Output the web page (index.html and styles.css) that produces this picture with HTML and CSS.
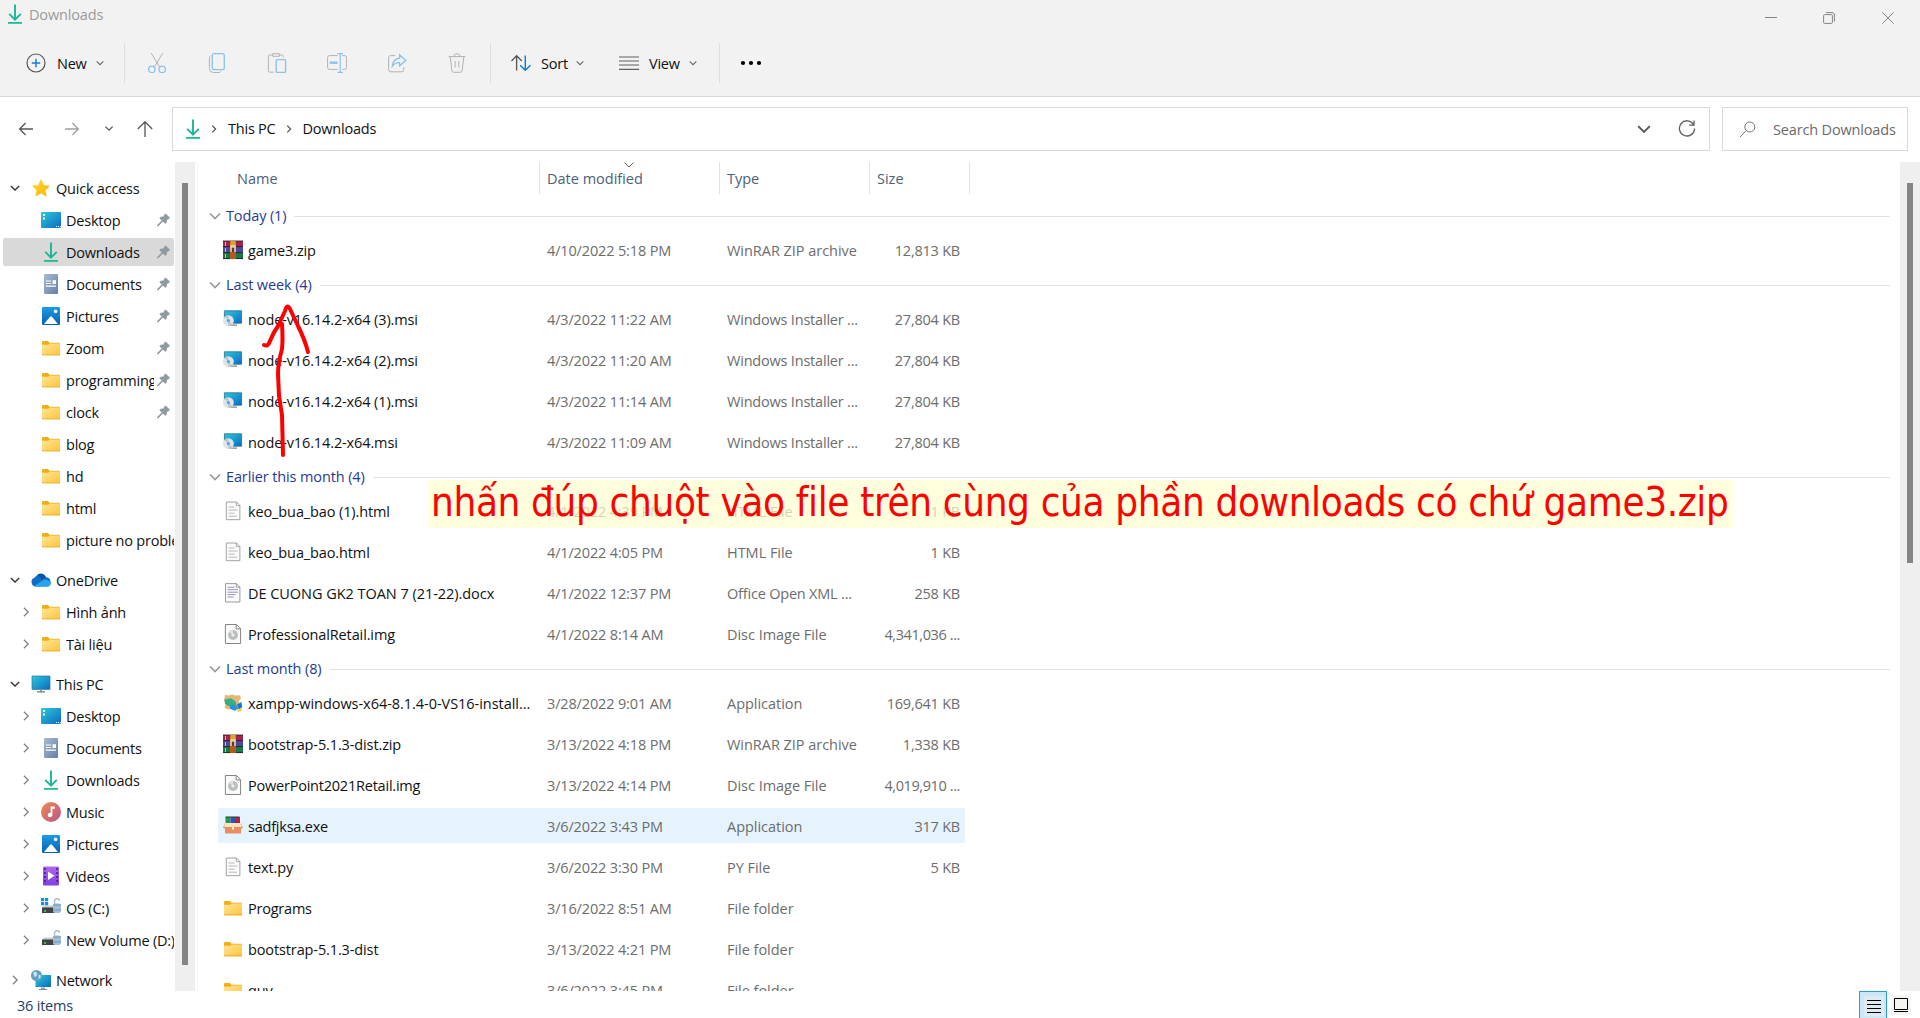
FILE: index.html
```html
<!DOCTYPE html>
<html lang="en">
<head>
<meta charset="utf-8">
<title>Downloads</title>
<link rel="stylesheet" href="styles.css">
</head>
<body>
<svg class="defs" width="0" height="0" aria-hidden="true">
  <defs>
    <linearGradient id="gFolder" x1="0" y1="0" x2="1" y2="1"><stop offset="0" stop-color="#ffe59a"/><stop offset="1" stop-color="#fdc53a"/></linearGradient>
    <linearGradient id="gBlue" x1="0" y1="0" x2="1" y2="1"><stop offset="0" stop-color="#2cc9dc"/><stop offset="1" stop-color="#0c6ac0"/></linearGradient>
    <linearGradient id="gPic" x1="0" y1="0" x2="0" y2="1"><stop offset="0" stop-color="#1e9be4"/><stop offset="1" stop-color="#0a5fb8"/></linearGradient>
    <linearGradient id="gDoc" x1="0" y1="0" x2="1" y2="1"><stop offset="0" stop-color="#a9bcd3"/><stop offset="1" stop-color="#647fa5"/></linearGradient>
    <linearGradient id="gMusic" x1="0" y1="0" x2="1" y2="1"><stop offset="0" stop-color="#ee8a4e"/><stop offset="1" stop-color="#b7568f"/></linearGradient>
    <linearGradient id="gVideo" x1="0" y1="0" x2="0" y2="1"><stop offset="0" stop-color="#b069ea"/><stop offset="1" stop-color="#7f3fe0"/></linearGradient>
    <linearGradient id="gStar" x1="0" y1="0" x2="1" y2="1"><stop offset="0" stop-color="#ffd73a"/><stop offset="1" stop-color="#fdb400"/></linearGradient>
  </defs>
  <symbol id="download" viewBox="0 0 20 20"><path d="M10 .6v14.6M4.2 9.8l5.8 5.8 5.8-5.8" fill="none" stroke="#1db598" stroke-width="1.9"/><path d="M3 18h14v1.8H3z" fill="#20bb93"/></symbol>
  <symbol id="folder" viewBox="0 0 20 20"><path d="M1 4.2Q1 3 2.2 3H7l1.6 1.8H18q1 0 1 1V9H1z" fill="#f3ae14"/><path d="M1 6.8h6.4l1.3-1.3H19v11.7H1z" fill="url(#gFolder)"/><path d="M1 16.4h18v.9H1z" fill="#eaa621"/></symbol>
  <symbol id="desktop" viewBox="0 0 20 20"><rect y="2" width="20" height="16" rx="1" fill="url(#gBlue)"/><path d="M2 4h2v2H2zM2 7.5h2v2H2z" fill="#fff"/><path d="M15 16.6h1.2M17 16.6h1.2M19 16.6h.8" stroke="#fff"/></symbol>
  <symbol id="document" viewBox="0 0 20 20"><rect x="3" width="14" height="20" rx="1" fill="url(#gDoc)"/><path d="M5 7h5M5 9.5h5M5 12.2h10" stroke="#fff" stroke-width="1.2"/><path d="M11.5 6.3h3.5v3.6h-3.5z" fill="#fff"/></symbol>
  <symbol id="picture" viewBox="0 0 20 20"><rect x="1" y="1" width="18" height="18" rx="1.2" fill="url(#gPic)"/><path d="M3 18l5.8-7q1.2-1.3 2.4 0L17 18z" fill="#fff"/><circle cx="14.6" cy="5.4" r="1.8" fill="#e8f4ff"/></symbol>
  <symbol id="star" viewBox="0 0 20 20"><path d="M10 1l2.8 5.9 6.3.8-4.6 4.5 1.2 6.4L10 15.5l-5.7 3.1 1.2-6.4L.9 7.7l6.3-.8z" fill="url(#gStar)"/></symbol>
  <symbol id="cloud" viewBox="0 0 20 20"><path d="M5 16.6a4.6 4.6 0 0 1-1.2-9A6.6 6.6 0 0 1 15 7.2a5 5 0 0 1 2 9.4z" fill="#0f6fc8"/><path d="M3 16.2L13 9.6q5 .2 6.8 3.6-.4 3.4-3.8 3.4H5z" fill="#28a3ea"/><path d="M6.4 4.7Q12 1.6 15 7.3L11 10z" fill="#0a52a5"/></symbol>
  <symbol id="pc" viewBox="0 0 20 20"><rect x="1" y="2" width="18" height="13.4" rx=".8" fill="url(#gBlue)"/><path d="M1 2h18v13.4H1z" fill="none" stroke="#27778f" stroke-width=".7"/><path d="M9 15.5h2v2H9z" fill="#8f999f"/><path d="M6 17.2h8v1.2H6z" fill="#6d777d"/></symbol>
  <symbol id="music" viewBox="0 0 20 20"><circle cx="10" cy="10" r="10" fill="url(#gMusic)"/><path d="M9.6 4.5h4.2v2.2h-2.4v6.2a2.3 2.1 0 1 1-1.8-2z" fill="#fff"/></symbol>
  <symbol id="video" viewBox="0 0 20 20"><rect x="2" y=".5" width="16" height="19" rx="1" fill="url(#gVideo)"/><path d="M4 2v16M16 2v16" stroke="#4c2496" stroke-width="1.8" stroke-dasharray="2 2"/><path d="M7 5.6l6.5 4.2L7 14z" fill="#fff"/></symbol>
  <symbol id="drive" viewBox="0 0 20 20"><path d="M3 7.5h12l3 3H1z" fill="#c9cdd0"/><path d="M1 9.6h15v5.4H1z" fill="#3f4346"/><path d="M3 13h2" stroke="#4fe04f" stroke-width="1.4"/><path d="M13.5 7V3.5q0-2.7 2.5-2.7t2.5 2.2" fill="none" stroke="#b3bdc5" stroke-width="1.5"/><rect x="12" y="5.5" width="8" height="9.5" rx="2" fill="#a9bccb"/><path d="M12 7h8M12 12h8" stroke="#3d9be0" stroke-width=".8"/></symbol>
  <symbol id="osdrive" viewBox="0 0 20 20"><use href="#drive"/><path d="M0 0h3.2v3.2H0zM4 0h3.2v3.2H4zM0 4h3.2v3.2H0zM4 4h3.2v3.2H4z" fill="#1491e0"/></symbol>
  <symbol id="network" viewBox="0 0 20 20"><rect x="4.5" y="5" width="15.5" height="12" fill="url(#gBlue)"/><path d="M10 17.5h4v1.2h-4zM8 19h8v1H8z" fill="#7e8a91"/><circle cx="5.5" cy="5.5" r="5.5" fill="#5f9fc5"/><path d="M2 3q3-3 4 0T3.5 7zM7.5 5q3-1 2 3l-2 1z" fill="#c9e2ef"/></symbol>
  <symbol id="pin" viewBox="0 0 14 14"><path d="M8.3 1.2q.6-1 1.5-.2l3.1 3.1q.8.9-.2 1.5L10.4 6.4l-.6 3.2q-.3 1.4-1.2.7L6.4 8.3 1.6 13l-1.1.4.4-1.1 4.7-4.8L3.3 5.4q-.7-.9.6-1.3l3.6-.5z" fill="#8e99a2" stroke="#8e99a2" stroke-width="1"/></symbol>
  <symbol id="down" viewBox="0 0 12 12"><path d="M1 3.5l5 5 5-5" fill="none" stroke="currentColor" stroke-width="1.6"/></symbol>
  <symbol id="right" viewBox="0 0 12 12"><path d="M3.5 1l5 5-5 5" fill="none" stroke="currentColor" stroke-width="1.6"/></symbol>
  <symbol id="rar" viewBox="0 0 20 20"><path d="M0 1h20v6H0z" fill="#a3234a"/><path d="M0 7h20v6H0z" fill="#4a479c"/><path d="M0 13h20v6H0z" fill="#187a40"/><path d="M0 1h20M0 6.6h20M0 12.6h20M0 18.6h20" stroke="#1b1b2a" stroke-width=".8"/><path d="M2.5 2v4M2.5 8v4M2.5 14v4" stroke="#e8c53a" stroke-width="1"/><path d="M7 1h6v18H7z" fill="#b4581d"/><path d="M7.4 1h5.2v7H7.4z" fill="#e3a320"/><path d="M8 9.5V6h4v3.5M8 12V9.4M12 12V9.4" stroke="#ddd" fill="none" stroke-width="1.4"/><path d="M9.2 8h1.6v4H9.2z" fill="#493226"/></symbol>
  <symbol id="msi" viewBox="0 0 20 20"><path d="M1.4 1.8h17.2v12.4H1.4z" fill="url(#gBlue)" stroke="#20708c" stroke-width=".8"/><path d="M7 15.5h7v1.2H7z" fill="#76838a"/><circle cx="5.4" cy="11.6" r="5.4" fill="#dfe4e7"/><path d="M5.4 11.6L1.4 8a5.4 5.4 0 0 1 4-1.8zM5.4 11.6l4 3.8a5.4 5.4 0 0 1-4 1.6z" fill="#bcc6cc"/><circle cx="5.4" cy="11.6" r="1.6" fill="#55a3dc"/></symbol>
  <symbol id="text" viewBox="0 0 20 20"><path d="M3.3 1h10.2l3.4 3.4v14.3H3.3z" fill="#fafafa" stroke="#999" stroke-width=".9"/><path d="M13.3 1v3.6h3.6" fill="none" stroke="#999" stroke-width=".8"/><path d="M5.5 6h6M5.5 9h9M5.5 12.2h6M5.5 15.2h8.5" stroke="#b4b4b4" stroke-width=".9"/></symbol>
  <symbol id="docx" viewBox="0 0 20 20"><path d="M2.5.6h11l3.4 3.4v15H2.5z" fill="#fafafa" stroke="#8f8f98" stroke-width=".9"/><path d="M13.3.8v3.4h3.5" fill="none" stroke="#999"/><path d="M4.5 4.3h7M4.5 6.7h10.5M4.5 9.2h10.5M4.5 11.6h8M4.5 14h6" stroke="#8b8ba7" stroke-width=".9"/></symbol>
  <symbol id="img" viewBox="0 0 20 20"><path d="M2.4.5h11l4.2 4.2v14.8H2.4z" fill="#fafafa" stroke="#777" stroke-width=".9"/><path d="M13.2.7v4.2h4.3" fill="none" stroke="#777" stroke-width=".9"/><circle cx="10" cy="11" r="5" fill="#b9bebf"/><path d="M10 11L6 8a5 5 0 0 1 4-2z" fill="#dde1e2"/><circle cx="10" cy="11" r="1.6" fill="#eee"/></symbol>
  <symbol id="xampp" viewBox="0 0 20 20"><path d="M2 2l3.4.6L9 1.4l3 1.2 5-.4 1 3.2-2.4 2.8 1.4 4.4-2.4 3.4-4.2-.6L5 16.6l-3.6-2.2L3 10.6 1 7.4z" fill="#e2b877"/><path d="M1.5 6.5L8 5.2l4.5 3 1 3.8-2.5 2-4.5-.4L2 11z" fill="#35ad86"/><path d="M7 13.5l3.4-2 3.6 1.6 1 3-3.5 1.7-4.5-2z" fill="#2b8fda"/><path d="M14 11.5l4.4-2.6.8 5.4-3.6 2.2z" fill="#1877c4"/><path d="M12.5 16l3.4 1 2.6-2.5v3l-3 1.3z" fill="#f0c51e"/></symbol>
  <symbol id="exe" viewBox="0 0 20 20"><path d="M2.5 1h5v6h-5z" fill="#1f9a4c"/><path d="M7.5 1H12v6H7.5z" fill="#3b4bb0"/><path d="M12 1h5v6h-5z" fill="#b3213f"/><path d="M2.5 1h14" stroke="#20442e"/><path d="M2 7h16l2 5-2 .6V17.6H2v-5L0 12z" fill="#e98d62"/><path d="M2 7h16l1 4H1z" fill="#fbe3bf"/><path d="M9 11h2v2.6H9z" fill="#fff1d6"/></symbol>
</svg>

<div class="window">
  <header class="top">
    <div class="titlebar">
      <svg class="ico20"><use href="#download"/></svg>
      <span class="title">Downloads</span>
      <div class="controls">
        <svg width="12" height="12" viewBox="0 0 12 12"><path d="M0 5.5h12"/></svg>
        <svg width="12" height="12" viewBox="0 0 12 12"><rect x=".6" y="2.6" width="8.8" height="8.8" rx="1"/><path d="M3 .6h6q2.4 0 2.4 2.4v6.5"/></svg>
        <svg width="12" height="12" viewBox="0 0 12 12"><path d="M.3.3l11.4 11.4M11.7.3L.3 11.7"/></svg>
      </div>
    </div>
    <nav class="toolbar">
      <div class="tool new">
        <svg width="20" height="20" viewBox="0 0 20 20" fill="none"><circle cx="10" cy="10" r="9" stroke="#555" stroke-width="1.2"/><path d="M10 5.8v8.4M5.8 10h8.4" stroke="#0c7cd5" stroke-width="1.4"/></svg>
        <span>New</span><svg class="chev"><use href="#down"/></svg>
      </div>
      <div class="actions">
        <svg viewBox="0 0 20 20"><path d="M4.2 0l8.4 14M15.8 0L7.4 14" stroke="#b3b3b3"/><g stroke="#8cc2ea" stroke-width="1.3"><circle cx="4.8" cy="16.4" r="3.2"/><circle cx="15.2" cy="16.4" r="3.2"/></g></svg>
        <svg viewBox="0 0 20 20"><path d="M3.5 3Q2.4 3.5 2.4 5v10.5q0 4 4 4H12q1.5 0 2-1.2" stroke="#b3b3b3"/><rect x="5.3" y=".7" width="12" height="16" rx="2" stroke="#8cc2ea" stroke-width="1.3"/></svg>
        <svg viewBox="0 0 20 20"><path d="M6 2H2.8Q1.4 2 1.4 3.4v14.2q0 1.6 1.6 1.6h3.6M12 2h2.6q1.6 0 1.6 1.6v1M5.6.7h6.8v2.6H5.6z" stroke="#b3b3b3"/><rect x="9.2" y="6.6" width="9.4" height="12.8" rx="1.2" stroke="#8cc2ea" stroke-width="1.4"/></svg>
        <svg viewBox="0 0 20 20"><path d="M10.6 2.6H2.4Q.6 2.6.6 4.4v10q0 2 1.8 2h8.2M15.4 2.6h2.4q1.8 0 1.8 2v9.8q0 2-1.8 2h-2.4" stroke="#b3b3b3"/><path d="M2.8 9.7h7.8" stroke="#8cc2ea" stroke-width="2.4"/><path d="M13.2.7v18.6M10.4.7H16M10.4 19.3H16" stroke="#8cc2ea" stroke-width="1.2"/></svg>
        <svg viewBox="0 0 20 20"><path d="M8.2 2.6H3.6q-2 0-2 2v12q0 2.2 2.2 2.2h11q2 0 2-2.2v-2.4" stroke="#b3b3b3"/><path d="M12.6 1.8l6.2 5.6-6.2 5.4V9.6Q8 9.4 5.4 13.2 6 6 12.6 5.2z" stroke="#8cc2ea" stroke-width="1.3"/></svg>
        <svg viewBox="0 0 20 20" stroke="#b3b3b3"><path d="M1.6 3.6h16.8M7 3.4Q7 .7 10 .7t3 2.7M3.2 3.8l1.6 13.6q.3 1.9 2 1.9h6.4q1.7 0 2-1.9l1.6-13.6M8.2 8v6.4M11.8 8v6.4"/></svg>
      </div>
      <div class="tool sort">
        <svg width="20" height="20" viewBox="0 0 20 20" fill="none"><path d="M5.6 17.4V3M.5 8l5.1-5.3L10.8 8" stroke="#555" stroke-width="1.3"/><path d="M14.3 2.5v14.3M9.2 12.2l5.1 5.1 5.2-5.1" stroke="#0c7cd5" stroke-width="1.4"/></svg>
        <span>Sort</span><svg class="chev"><use href="#down"/></svg>
      </div>
      <div class="tool view">
        <svg width="20" height="20" viewBox="0 0 20 20"><path d="M0 4h20M0 8h20M0 12h20M0 16.3h20" stroke="#606060" stroke-width="1.2"/></svg>
        <span>View</span><svg class="chev"><use href="#down"/></svg>
      </div>
      <div class="tool more"><svg width="22" height="6" viewBox="0 0 22 6"><circle cx="3" cy="3" r="2.1"/><circle cx="11" cy="3" r="2.1"/><circle cx="19" cy="3" r="2.1"/></svg></div>
    </nav>
  </header>

  <div class="navbar">
    <div class="history">
      <svg viewBox="0 0 16 16" stroke="#555"><path d="M15 8H1.6M7.6 2L1.6 8l6 6"/></svg>
      <svg viewBox="0 0 16 16" stroke="#a0a0a0"><path d="M1 8h13.4M8.4 2l6 6-6 6"/></svg>
      <svg viewBox="0 0 16 16" stroke="#555"><path d="M4.4 5.6L8 9.2l3.6-3.6"/></svg>
      <svg viewBox="0 0 16 16" stroke="#555"><path d="M8 16V.8M.8 8L8 .8 15.2 8"/></svg>
    </div>
    <div class="address">
      <svg class="ico20"><use href="#download"/></svg>
      <svg class="crumb"><use href="#right"/></svg><span>This PC</span>
      <svg class="crumb"><use href="#right"/></svg><span>Downloads</span>
      <svg class="drop" width="14" height="14"><use href="#down"/></svg>
      <svg class="reload" width="18" height="18" viewBox="0 0 18 18"><path d="M15.6 4.6A7.6 7.6 0 1 0 16.6 8.4M16 .6v4.6h-4.8" fill="none" stroke="#606060" stroke-width="1.3"/></svg>
    </div>
    <div class="search">
      <svg width="17" height="17" viewBox="0 0 17 17"><circle cx="10.8" cy="6" r="5" fill="none" stroke="#777"/><path d="M7.2 9.6L1 16" stroke="#777"/></svg>
      <span>Search Downloads</span>
    </div>
  </div>

  <main class="body">
    <aside class="tree">
      <div class="node root"><svg class="tw open"><use href="#down"/></svg><svg class="ico20"><use href="#star"/></svg><span>Quick access</span></div>
      <div class="node"><i class="tw"></i><svg class="ico20"><use href="#desktop"/></svg><span>Desktop</span><svg class="pin"><use href="#pin"/></svg></div>
      <div class="node selected"><i class="tw"></i><svg class="ico20"><use href="#download"/></svg><span>Downloads</span><svg class="pin"><use href="#pin"/></svg></div>
      <div class="node"><i class="tw"></i><svg class="ico20"><use href="#document"/></svg><span>Documents</span><svg class="pin"><use href="#pin"/></svg></div>
      <div class="node"><i class="tw"></i><svg class="ico20"><use href="#picture"/></svg><span>Pictures</span><svg class="pin"><use href="#pin"/></svg></div>
      <div class="node"><i class="tw"></i><svg class="ico20"><use href="#folder"/></svg><span>Zoom</span><svg class="pin"><use href="#pin"/></svg></div>
      <div class="node"><i class="tw"></i><svg class="ico20"><use href="#folder"/></svg><span>programming</span><svg class="pin"><use href="#pin"/></svg></div>
      <div class="node"><i class="tw"></i><svg class="ico20"><use href="#folder"/></svg><span>clock</span><svg class="pin"><use href="#pin"/></svg></div>
      <div class="node"><i class="tw"></i><svg class="ico20"><use href="#folder"/></svg><span>blog</span></div>
      <div class="node"><i class="tw"></i><svg class="ico20"><use href="#folder"/></svg><span>hd</span></div>
      <div class="node"><i class="tw"></i><svg class="ico20"><use href="#folder"/></svg><span>html</span></div>
      <div class="node"><i class="tw"></i><svg class="ico20"><use href="#folder"/></svg><span>picture no problem</span></div>
      <div class="node root"><svg class="tw open"><use href="#down"/></svg><svg class="ico20"><use href="#cloud"/></svg><span>OneDrive</span></div>
      <div class="node"><svg class="tw"><use href="#right"/></svg><svg class="ico20"><use href="#folder"/></svg><span>Hình ảnh</span></div>
      <div class="node"><svg class="tw"><use href="#right"/></svg><svg class="ico20"><use href="#folder"/></svg><span>Tài liệu</span></div>
      <div class="node root"><svg class="tw open"><use href="#down"/></svg><svg class="ico20"><use href="#pc"/></svg><span>This PC</span></div>
      <div class="node"><svg class="tw"><use href="#right"/></svg><svg class="ico20"><use href="#desktop"/></svg><span>Desktop</span></div>
      <div class="node"><svg class="tw"><use href="#right"/></svg><svg class="ico20"><use href="#document"/></svg><span>Documents</span></div>
      <div class="node"><svg class="tw"><use href="#right"/></svg><svg class="ico20"><use href="#download"/></svg><span>Downloads</span></div>
      <div class="node"><svg class="tw"><use href="#right"/></svg><svg class="ico20"><use href="#music"/></svg><span>Music</span></div>
      <div class="node"><svg class="tw"><use href="#right"/></svg><svg class="ico20"><use href="#picture"/></svg><span>Pictures</span></div>
      <div class="node"><svg class="tw"><use href="#right"/></svg><svg class="ico20"><use href="#video"/></svg><span>Videos</span></div>
      <div class="node"><svg class="tw"><use href="#right"/></svg><svg class="ico20"><use href="#osdrive"/></svg><span>OS (C:)</span></div>
      <div class="node"><svg class="tw"><use href="#right"/></svg><svg class="ico20"><use href="#drive"/></svg><span>New Volume (D:)</span></div>
      <div class="node root"><svg class="tw"><use href="#right"/></svg><svg class="ico20"><use href="#network"/></svg><span>Network</span></div>
    </aside>
    <div class="scroll side"><div class="thumb"></div></div>

    <section class="files">
      <div class="columns">
        <div class="c-name">Name</div>
        <div class="c-date">Date modified<svg class="sorted" width="10" height="6" viewBox="0 0 10 6"><path d="M.6.6L5 5 9.4.6" fill="none" stroke="#666"/></svg></div>
        <div class="c-type">Type</div>
        <div class="c-size">Size</div>
      </div>

      <div class="group"><svg><use href="#down"/></svg><span>Today (1)</span></div>
      <div class="row"><svg class="ico20"><use href="#rar"/></svg><span class="name">game3.zip</span><span class="date">4/10/2022 5:18 PM</span><span class="type">WinRAR ZIP archive</span><span class="size">12,813 KB</span></div>

      <div class="group"><svg><use href="#down"/></svg><span>Last week (4)</span></div>
      <div class="row"><svg class="ico20"><use href="#msi"/></svg><span class="name">node-v16.14.2-x64 (3).msi</span><span class="date">4/3/2022 11:22 AM</span><span class="type cut">Windows Installer ...</span><span class="size">27,804 KB</span></div>
      <div class="row"><svg class="ico20"><use href="#msi"/></svg><span class="name">node-v16.14.2-x64 (2).msi</span><span class="date">4/3/2022 11:20 AM</span><span class="type cut">Windows Installer ...</span><span class="size">27,804 KB</span></div>
      <div class="row"><svg class="ico20"><use href="#msi"/></svg><span class="name">node-v16.14.2-x64 (1).msi</span><span class="date">4/3/2022 11:14 AM</span><span class="type cut">Windows Installer ...</span><span class="size">27,804 KB</span></div>
      <div class="row"><svg class="ico20"><use href="#msi"/></svg><span class="name">node-v16.14.2-x64.msi</span><span class="date">4/3/2022 11:09 AM</span><span class="type cut">Windows Installer ...</span><span class="size">27,804 KB</span></div>

      <div class="group"><svg><use href="#down"/></svg><span>Earlier this month (4)</span></div>
      <div class="row"><svg class="ico20"><use href="#text"/></svg><span class="name">keo_bua_bao (1).html</span><span class="date">4/1/2022 4:39 PM</span><span class="type">HTML File</span><span class="size">1 KB</span></div>
      <div class="row"><svg class="ico20"><use href="#text"/></svg><span class="name">keo_bua_bao.html</span><span class="date">4/1/2022 4:05 PM</span><span class="type">HTML File</span><span class="size">1 KB</span></div>
      <div class="row"><svg class="ico20"><use href="#docx"/></svg><span class="name long">DE CUONG GK2 TOAN 7 (21-22).docx</span><span class="date">4/1/2022 12:37 PM</span><span class="type cut">Office Open XML ...</span><span class="size">258 KB</span></div>
      <div class="row"><svg class="ico20"><use href="#img"/></svg><span class="name">ProfessionalRetail.img</span><span class="date">4/1/2022 8:14 AM</span><span class="type">Disc Image File</span><span class="size cut">4,341,036 ...</span></div>

      <div class="group"><svg><use href="#down"/></svg><span>Last month (8)</span></div>
      <div class="row"><svg class="ico20"><use href="#xampp"/></svg><span class="name long">xampp-windows-x64-8.1.4-0-VS16-install...</span><span class="date">3/28/2022 9:01 AM</span><span class="type">Application</span><span class="size">169,641 KB</span></div>
      <div class="row"><svg class="ico20"><use href="#rar"/></svg><span class="name">bootstrap-5.1.3-dist.zip</span><span class="date">3/13/2022 4:18 PM</span><span class="type">WinRAR ZIP archive</span><span class="size">1,338 KB</span></div>
      <div class="row"><svg class="ico20"><use href="#img"/></svg><span class="name tight">PowerPoint2021Retail.img</span><span class="date">3/13/2022 4:14 PM</span><span class="type">Disc Image File</span><span class="size cut">4,019,910 ...</span></div>
      <div class="row hover"><svg class="ico20"><use href="#exe"/></svg><span class="name tight">sadfjksa.exe</span><span class="date">3/6/2022 3:43 PM</span><span class="type">Application</span><span class="size">317 KB</span></div>
      <div class="row"><svg class="ico20"><use href="#text"/></svg><span class="name">text.py</span><span class="date">3/6/2022 3:30 PM</span><span class="type">PY File</span><span class="size">5 KB</span></div>
      <div class="row"><svg class="ico20"><use href="#folder"/></svg><span class="name tight">Programs</span><span class="date">3/16/2022 8:51 AM</span><span class="type">File folder</span><span class="size"></span></div>
      <div class="row"><svg class="ico20"><use href="#folder"/></svg><span class="name">bootstrap-5.1.3-dist</span><span class="date">3/13/2022 4:21 PM</span><span class="type">File folder</span><span class="size"></span></div>
      <div class="row"><svg class="ico20"><use href="#folder"/></svg><span class="name">quy</span><span class="date">3/6/2022 3:45 PM</span><span class="type">File folder</span><span class="size"></span></div>
    </section>
    <div class="scroll main"><div class="thumb"></div></div>
  </main>

  <footer class="status">
    <span>36 items</span>
    <div class="modes">
      <svg class="on" width="28" height="28" viewBox="0 0 28 28"><path d="M5 5h20v20H5z" fill="#deebf2"/><path d="M8 9.5h14M8 13.5h14M8 17.5h14M8 21.5h14" stroke="#000"/></svg>
      <svg width="28" height="28" viewBox="0 0 28 28"><path d="M4 4h20v20H4z" fill="#f4f4f4"/><path d="M7.5 7.5h13v11h-13zM7 20.5h14" fill="none" stroke="#000"/></svg>
    </div>
  </footer>

  <svg class="ink" width="60" height="170" viewBox="0 0 60 170"><path d="M9 46q4 2 6-4 3-8 8-15l7-15q2-8 5-2l8 17q7 14 10 26M27 25q1 16 0 25-4 14-4 25l1 22 3 19 1 40"/></svg>
  <div class="note"><span>nhấn đúp chuột vào file trên cùng của phần downloads có chứ game3.zip</span></div>
</div>
</body>
</html>
```
FILE: styles.css
```css
* { box-sizing: border-box; }
body { margin: 0; background: #fff; font: 14.5px/20px "Open Sans", "Noto Sans", sans-serif; letter-spacing: -.22px; color: #111; }
svg { flex: none; display: block; }
span { white-space: nowrap; }
.defs { position: absolute; }
.ico20 { width: 20px; height: 20px; }
.window { position: relative; width: 1920px; height: 1018px; overflow: hidden; display: flex; flex-direction: column; }

.top { height: 97px; background: #f2f2f2; border-bottom: 1px solid #d9d9d9; }
.titlebar { height: 34px; display: flex; align-items: flex-start; padding: 4px 26px 0 5px; }
.title { color: #9a9a9a; margin-left: 4px; padding-top: 1px; letter-spacing: -.15px; }
.controls { margin: 8px 0 0 auto; display: flex; gap: 47px; }
.controls svg { fill: none; stroke: #858585; }
.controls svg:first-child { margin-right: -1px; }
.toolbar { display: flex; align-items: center; height: 58px; }
.tool { display: flex; align-items: center; height: 40px; }
.tool span { padding-top: 1px; }
.tool .chev { width: 8px; height: 8px; color: #666; }
.new { width: 125px; padding-left: 26px; border-right: 1px solid #dedede; }
.new span { width: 39px; margin-left: 11px; }
.actions { width: 366px; height: 40px; display: flex; align-items: center; gap: 40px; padding-left: 22px; border-right: 1px solid #dedede; }
.actions svg { width: 20px; height: 20px; fill: none; }
.sort { width: 128px; padding-left: 20px; }
.sort span { width: 35px; margin-left: 10px; }
.view { width: 101px; border-right: 1px solid #dedede; }
.view span { width: 40px; margin-left: 10px; }
.more { padding-left: 20px; }

.navbar { height: 65px; display: flex; align-items: flex-start; padding-top: 10px; }
.history { width: 172px; height: 43px; display: flex; align-items: center; padding-left: 18px; }
.history svg { width: 16px; height: 16px; fill: none; stroke-width: 1.3; }
.history svg:nth-child(2) { margin-left: 30px; }
.history svg:nth-child(3) { margin-left: 21px; }
.history svg:nth-child(4) { margin-left: 20px; }
.address { width: 1538px; height: 44px; border: 1px solid #d9d9d9; display: flex; align-items: center; padding: 0 13px 0 10px; }
.crumb { width: 8px; height: 8px; margin: 0 10px 0 9px; color: #444; }
.ico20 + .crumb { margin-left: 7px; }
.drop { margin-left: auto; color: #555; }
.reload { margin-left: 27px; }
.search { width: 186px; height: 44px; margin-left: 12px; border: 1px solid #d9d9d9; display: flex; align-items: center; padding-left: 16px; color: #6b6b6b; }
.search span { margin-left: 17px; padding-top: 1px; letter-spacing: -.16px; }

.body { height: 829px; display: flex; }
.tree { width: 175px; height: 829px; overflow: hidden; padding-top: 10px; }
.node { height: 28px; margin: 2px 1px 4px 3px; padding-left: 18px; display: flex; align-items: center; overflow: hidden; border-radius: 2px; }
.node + .root { margin-top: 12px; }
.node.root { padding-left: 7px; }
.tw { width: 10px; height: 10px; flex: none; margin-right: 10px; color: #858585; }
.root .tw { margin-right: 11px; }
.tw.open { color: #333; }
.node span { flex: 1; min-width: 0; margin-left: 5px; padding-top: 2px; overflow: hidden; }
.pin { width: 13px; height: 14px; margin: 0 4px 0 3px; }
.selected { background: #d9d9d9; }

.scroll { width: 20px; height: 829px; background: #efefef; padding: 21px 7px 0; flex: none; }
.thumb { width: 6px; background: #858585; }
.side .thumb { height: 782px; }
.main .thumb { height: 380px; }

.files { flex: 1; height: 829px; overflow: hidden; padding-left: 14px; margin-left: 2px; border-left: 1px solid #f6f6f6; display: flex; flex-direction: column; }
.files > * { flex: none; }
.columns { display: flex; height: 40px; color: #4c607a; letter-spacing: 0; }
.columns > div { height: 32px; padding: 7px 0 0 7px; border-right: 1px solid #e2e2e2; }
.columns .c-name { width: 328px; padding-left: 25px; }
.c-date { width: 180px; position: relative; }
.c-type { width: 150px; }
.c-size { width: 100px; }
.sorted { position: absolute; left: 84px; top: 0; }
.group { height: 28px; display: flex; align-items: center; margin-right: 10px; color: #1f3a93; letter-spacing: -.12px; }
.group svg { width: 12px; height: 12px; margin: 0 5px 0 -3px; color: #999; }
.group::after { content: ""; flex: 1; height: 1px; margin-left: 8px; background: #e2e2e2; }
.row { width: 747px; height: 35px; margin: 2px 0 4px 6px; padding-left: 5px; display: flex; align-items: center; color: #6d6d6d; }
.row span { padding-top: 2px; }
.row .name { width: 299px; margin-left: 5px; color: #111; letter-spacing: -.12px; }
.row .long { letter-spacing: -.04px; }
.row .tight { letter-spacing: -.22px; }
.date { width: 180px; letter-spacing: -.15px; }
.type { width: 148px; letter-spacing: -.03px; }
.size { width: 85px; text-align: right; }
.type.cut { letter-spacing: -.2px; }
.size.cut { letter-spacing: -.4px; }
.hover { background: #e5f3fd; border-radius: 2px; }

.status { height: 27px; display: flex; align-items: flex-start; justify-content: space-between; padding: 5px 5px 0 17px; color: #264063; }
.modes { display: flex; margin-top: -5px; }
.on { background: #cce8f6; outline: 1px solid #2a9bd6; outline-offset: -1px; }

.ink { position: absolute; left: 255px; top: 299px; fill: none; stroke: #f00; stroke-width: 4; stroke-linecap: round; stroke-linejoin: round; }
.note { position: absolute; left: 428px; top: 480px; width: 1305px; height: 48px; padding-left: 3px; background: rgba(255, 255, 208, .7); color: #f00; font: 40px/44px "DejaVu Sans Condensed", "DejaVu Sans", sans-serif; font-stretch: condensed; letter-spacing: -.36px; }
```
